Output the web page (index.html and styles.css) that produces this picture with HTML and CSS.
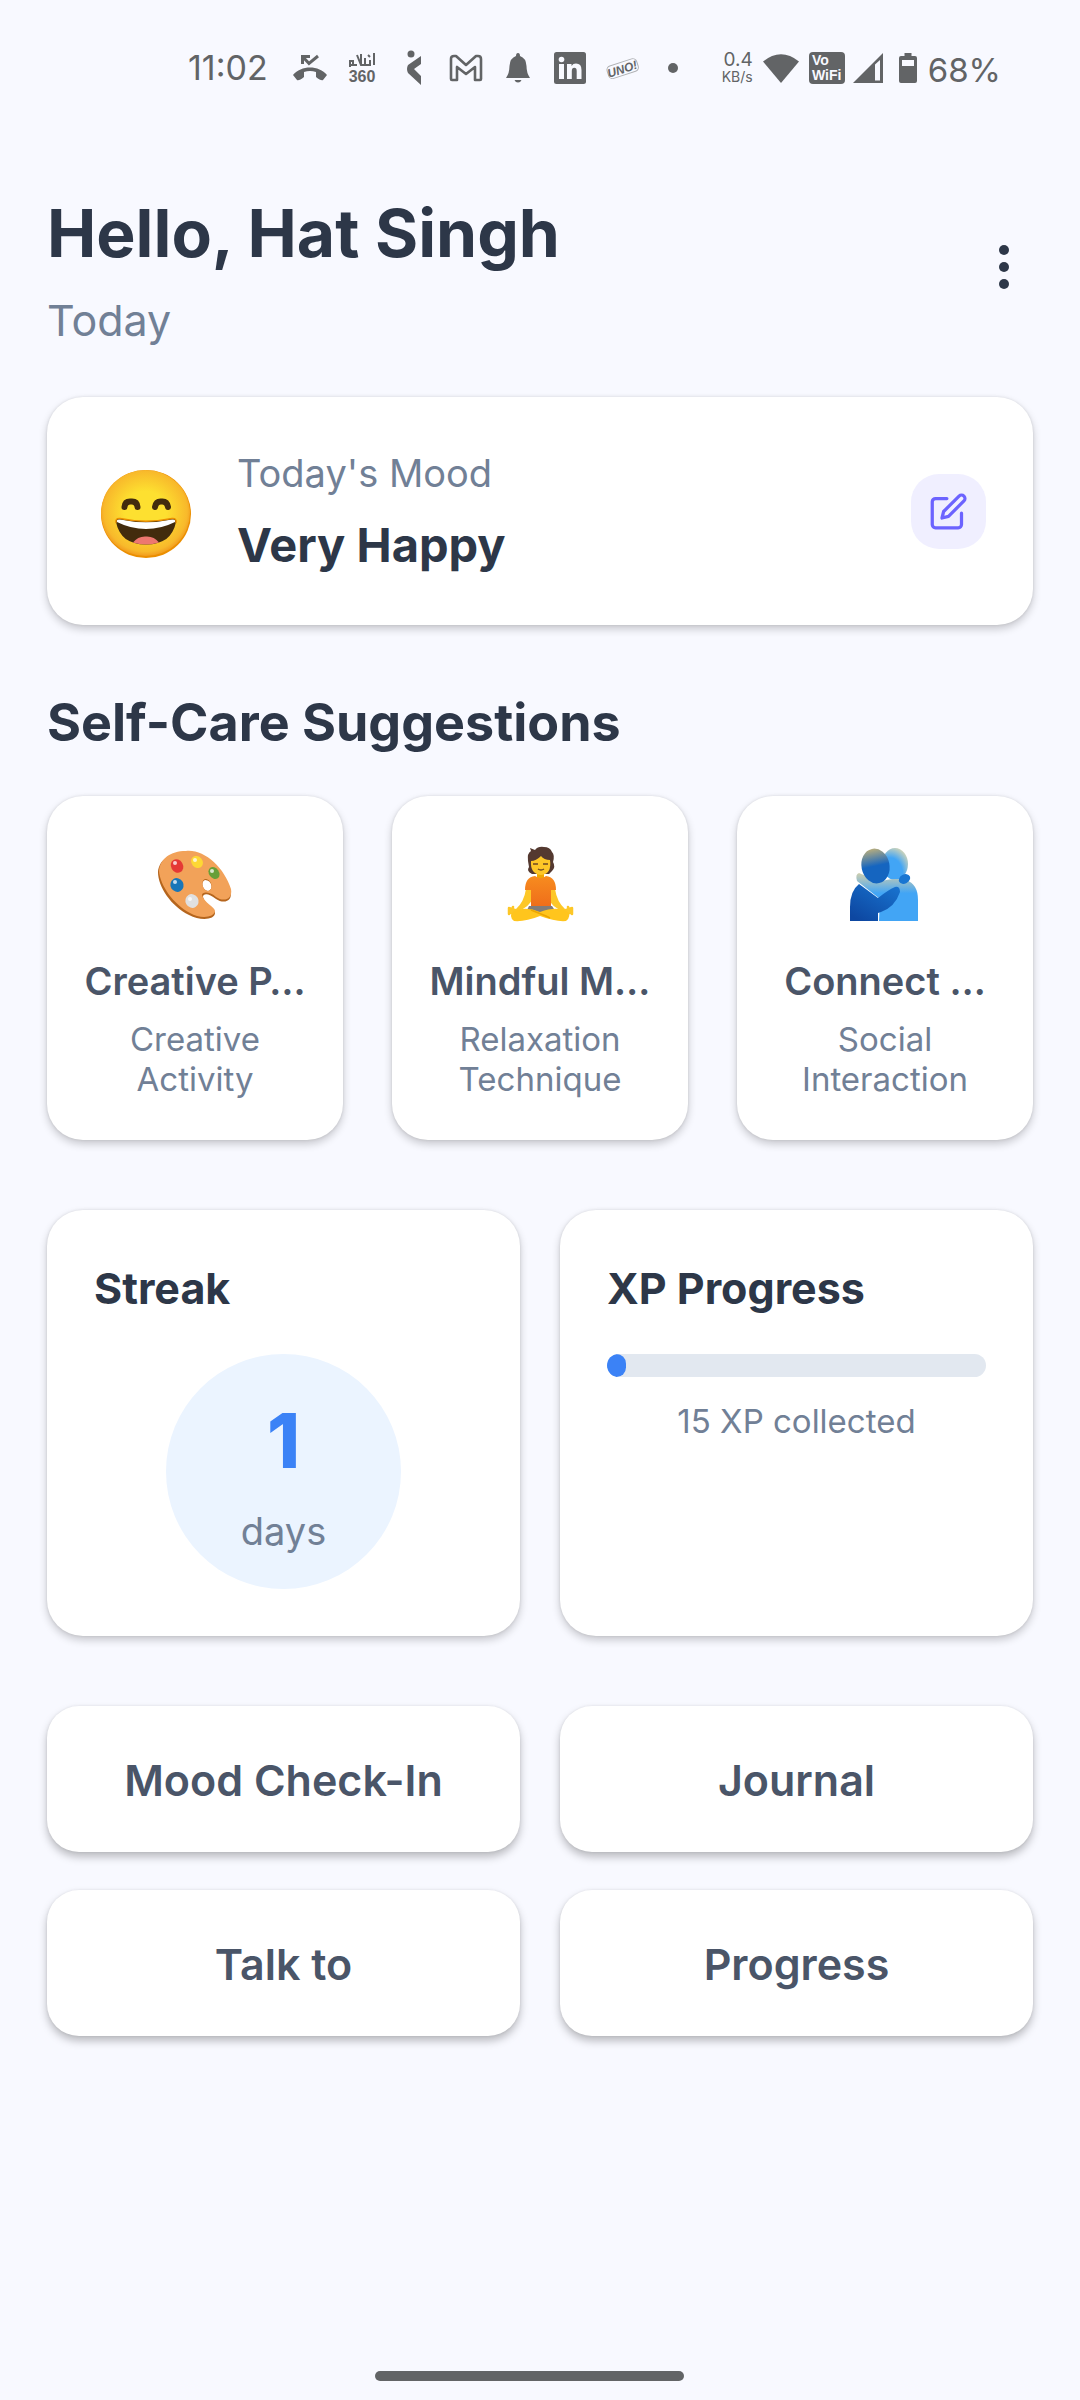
FILE: index.html
```html
<!DOCTYPE html>
<html lang="en">
<head>
<meta charset="utf-8">
<meta name="viewport" content="width=device-width, initial-scale=1">
<title>Mood Dashboard</title>
<link rel="stylesheet" href="styles.css">
</head>
<body>
<div class="screen">
  <div class="status">
    <span class="status-time">11:02</span>
    <div class="status-apps">
      <svg class="ic-call" viewBox="0 0 36 28" aria-hidden="true"><path d="M1 21C9 11 27 11 35 21L31 26Q29 27 24 23V18Q18 16 12 18V23Q7 27 5 26Z" fill="#626466"/><path d="M10.500 10V2.500H18M11 3L17 9.500L26 2" fill="none" stroke="#626466" stroke-width="3"/></svg>
      <svg class="ic-islam" viewBox="0 0 28 32" aria-hidden="true"><g fill="none" stroke="#626466" stroke-width="2"><path d="M26 1V13M22 8V13H17V6M17 13H13L9 3M13 2V13M9 13H5M2 15V9H5V13H1M20 3L22 5"/></g><text x="14" y="30" text-anchor="middle" class="ic-360">360</text></svg>
      <svg class="ic-k" viewBox="0 0 16 36" aria-hidden="true"><circle cx="5" cy="4" r="3.500" fill="#626466"/><path d="M15 6V14L8 19L15 26V35L2 23Q0 19 2 15Z" fill="#626466"/></svg>
      <svg class="ic-gmail" viewBox="0 0 34 28" aria-hidden="true"><path d="M2 5Q2 2 5 2H7L17 11L27 2H29Q32 2 32 5V25Q32 26 31 26H26V13L17 20L8 13V26H3Q2 26 2 25Z" fill="none" stroke="#626466" stroke-width="2.600" stroke-linejoin="round"/></svg>
      <svg class="ic-bell" viewBox="0 0 24 30" aria-hidden="true"><path d="M12 0Q14 0 14 3Q20 5 20.500 13Q20.500 20 24 25H0Q3.500 20 3.500 13Q4 5 10 3Q10 0 12 0ZM8.500 27H15.500Q14.500 29.500 12 29.500Q9.500 29.500 8.500 27Z" fill="#626466"/></svg>
      <svg class="ic-in" viewBox="0 0 32 32" aria-hidden="true"><rect width="32" height="32" rx="2.500" fill="#626466"/><circle cx="7.500" cy="7.500" r="2.800" fill="#f8f9ff"/><path d="M5 12H10V27H5ZM13 12H17.500V14Q19 11.600 22 11.600Q27.500 11.600 27.500 18V27H22.700V19Q22.700 15.700 20.300 15.700Q17.800 15.700 17.800 19V27H13Z" fill="#f8f9ff"/></svg>
      <svg class="ic-uno" viewBox="0 0 34 28" aria-hidden="true"><g transform="rotate(-18 17 14)"><rect x="1" y="8" width="31" height="13" rx="4" fill="none" stroke="#b0b2b5" stroke-width="1"/><text x="16" y="19" text-anchor="middle" class="ic-uno-text">UNO!</text></g></svg>
      <svg class="ic-more" viewBox="0 0 10 10" aria-hidden="true"><circle cx="5" cy="5" r="5" fill="#626466"/></svg>
    </div>
    <div class="status-system">
      <div class="net"><span class="net-rate">0.4</span><span class="net-unit">KB/s</span></div>
      <svg class="ic-wifi" viewBox="0 0 36 29" aria-hidden="true"><path d="M0 7.500Q18 -7 36 7.500L18 29Z" fill="#626466"/></svg>
      <svg class="ic-vo" viewBox="0 0 36 32" aria-hidden="true"><rect width="36" height="32" rx="4" fill="#626466"/><text x="3" y="13" class="ic-vo-text">Vo</text><text x="3" y="28" class="ic-vo-text">WiFi</text></svg>
      <svg class="ic-signal" viewBox="0 0 30 30" aria-hidden="true"><path fill-rule="evenodd" d="M0 30L30 0V30ZM22 11.500V27.500H27V7Z" fill="#626466"/></svg>
      <svg class="ic-battery" viewBox="0 0 18 30" aria-hidden="true"><path fill-rule="evenodd" d="M5.500 0H12.500V3H16Q18 3 18 5V28Q18 30 16 30H2Q0 30 0 28V5Q0 3 2 3H5.500ZM3 7V13H15V7Z" fill="#626466"/></svg>
      <span class="status-charge">68%</span>
    </div>
  </div>

  <main class="content">
    <header class="header">
      <div class="greeting">
        <h1 class="title">Hello, Hat Singh</h1>
        <p class="date">Today</p>
      </div>
      <button class="menu" type="button" aria-label="Menu">
        <svg class="menu-dots" viewBox="0 0 10 44"><g fill="#2d3748"><circle cx="5" cy="5" r="5"/><circle cx="5" cy="22" r="5"/><circle cx="5" cy="39" r="5"/></g></svg>
      </button>
    </header>

    <section class="card mood">
      <svg class="mood-face" viewBox="0 0 90 88" role="img" aria-label="Very happy face">
        <defs><radialGradient id="face" cx=".5" cy=".48" r=".52"><stop offset=".45" stop-color="#fde030"/><stop offset=".9" stop-color="#f8b92b"/><stop offset="1" stop-color="#f29c1f"/></radialGradient></defs>
        <ellipse cx="45" cy="44" rx="45" ry="44" fill="#eb8f00"/>
        <ellipse cx="44.500" cy="43" rx="44.500" ry="43" fill="url(#face)"/>
        <path d="M23.500 37Q24 31 30 31.500Q36 31 36.500 37M54 37Q55 31 60.500 31.500Q66 31 67 37" fill="none" stroke="#422b0d" stroke-width="6" stroke-linecap="round"/>
        <path d="M15 52Q14 48 19 48.500Q45 54 71 48.500Q76 48 75 52C72 67 62 74.500 45 74.500S18 67 15 52Z" fill="#422b0d"/>
        <path d="M32 72.500Q37 66 45 66.500Q53 66 58 72.500Q52 74.500 45 74.500T32 72.500Z" fill="#ed7770"/>
        <path d="M16 52Q15 49 19 49.500Q45 55 71 49.500Q75 49 74 52Q60 59 45 59T16 52Z" fill="#fff"/>
        <path d="M15 53Q14 48 19 48.500Q45 54 71 48.500Q76 48 75 53" fill="none" stroke="#eb8f00" stroke-width="1.500"/>
      </svg>
      <div class="mood-text">
        <p class="mood-label">Today's Mood</p>
        <p class="mood-value">Very Happy</p>
      </div>
      <button class="edit" type="button" aria-label="Edit mood">
        <svg class="edit-icon" viewBox="0 0 24 24" fill="none" stroke="#6c63ff" stroke-width="2" stroke-linecap="round" stroke-linejoin="round"><path d="M11 4H4a2 2 0 0 0-2 2v14a2 2 0 0 0 2 2h14a2 2 0 0 0 2-2v-7"/><path d="M18.500 2.500a2.121 2.121 0 0 1 3 3L12 15l-4 1 1-4 9.500-9.500z"/></svg>
      </button>
    </section>

    <h2 class="section-title">Self-Care Suggestions</h2>
    <section class="suggestions">
      <article class="card suggestion">
        <svg class="suggestion-art" viewBox="0 0 76 76" aria-hidden="true">
          <path d="M29 5C47 3 66 21 73 43C77 55 66 57 59 52C52 46 46 46 46 50C48 58 58 61 58 66C58 73 43 74 32 68C14 59 1 40 1 25C2 13 13 5 29 5ZM48 33C43 35 46 44 51 44C57 43 55 33 48 33Z" fill="#b5651d" fill-rule="evenodd"/>
          <path d="M29 4C47 2 67 20 74 42C76 53 66 55 59 50C52 44 45 45 45 48C47 56 58 60 58 64C57 71 43 72 33 66C16 57 3 38 2 24C3 12 13 4 29 4ZM48 32C43 34 46 44 51 44C57 43 55 32 48 32Z" fill="#f2a259" fill-rule="evenodd"/>
          <ellipse cx="20" cy="19" rx="6" ry="7" transform="rotate(-30 20 19)" fill="#e53935"/>
          <ellipse cx="40" cy="15" rx="5.500" ry="6.500" transform="rotate(-40 40 15)" fill="#fdd835"/>
          <ellipse cx="57" cy="26" rx="5" ry="6.500" transform="rotate(-35 57 26)" fill="#689f38"/>
          <ellipse cx="20" cy="38" rx="6.500" ry="7" transform="rotate(-30 20 38)" fill="#1976b8"/>
          <ellipse cx="35" cy="54" rx="6.500" ry="7" transform="rotate(-30 35 54)" fill="#e0e0e0"/>
          <g fill="#fff" opacity=".75"><circle cx="18" cy="16" r="2"/><circle cx="38" cy="13" r="2"/><circle cx="55" cy="24" r="2"/><circle cx="18" cy="35" r="2"/><circle cx="33" cy="52" r="2"/></g>
        </svg>
        <h3 class="suggestion-title">Creative P…</h3>
        <p class="suggestion-kind">Creative Activity</p>
      </article>
      <article class="card suggestion">
        <svg class="suggestion-art" viewBox="0 0 76 76" aria-hidden="true">
          <defs><linearGradient id="shirt" x2="0" y2="1"><stop stop-color="#f78c1f"/><stop offset="1" stop-color="#ef6c1a"/></linearGradient></defs>
          <path d="M26 14Q25 6 29 4L28 1L33 3Q36 -1 42 0Q48 0 50 5Q53 8 51 15Q54 20 50 24L47 27H30Q24 24 27 20Z" fill="#543930"/>
          <path d="M35 25H42V34H35Z" fill="#f0a800"/>
          <path d="M29 14Q34 14 39 9Q42 13 48 13Q50 27 39 28Q28 27 29 14Z" fill="#fdc727"/>
          <path d="M31 17H36M41 17H46M36 22Q39 24 42 22" fill="none" stroke="#6d4a24" stroke-width="1.500"/>
          <path d="M24 42H31V50Q28 60 16 64L11 69L6 62L8 60L14 62Q22 55 24 42ZM46 42H53Q55 55 63 62L69 60L71 62L66 69L61 64Q49 60 46 50Z" fill="#fdc727"/>
          <path d="M7 61V67M11 60L9 66M70 61V67M66 60L68 66" stroke="#fdc727" stroke-width="2.500" stroke-linecap="round"/>
          <path d="M23 43Q23 30 33 29Q39 33 44 29Q54 30 54 43H49V61H29V43Z" fill="url(#shirt)"/>
          <path d="M27 59H50L54 65H24Z" fill="#827c78"/>
          <path d="M12 64Q24 59 38 65Q54 59 65 64Q70 69 64 74Q54 75 38 69Q23 75 12 74Q6 69 12 64Z" fill="#ffc51d"/><path d="M29 63L44 69L48 71" fill="none" stroke="#eda600" stroke-width="1.500"/>
        </svg>
        <h3 class="suggestion-title">Mindful M…</h3>
        <p class="suggestion-kind">Relaxation Technique</p>
      </article>
      <article class="card suggestion">
        <svg class="suggestion-art" viewBox="0 0 76 76" aria-hidden="true">
          <defs>
            <linearGradient id="hug-a" x2="0" y2="1"><stop stop-color="#b7ad7e"/><stop offset=".5" stop-color="#1565c0"/></linearGradient>
            <radialGradient id="hug-b" cx=".3" cy=".8" r=".9"><stop offset=".55" stop-color="#42a5f5"/><stop offset="1" stop-color="#dcd9b4"/></radialGradient>
            <linearGradient id="hug-c" x2="0" y2="1"><stop stop-color="#d0cfae"/><stop offset=".42" stop-color="#42a5f5"/></linearGradient>
            <linearGradient id="hug-d" x1="1" y1="0" x2=".2" y2="1"><stop stop-color="#1976d2"/><stop offset="1" stop-color="#0d47a1"/></linearGradient>
          </defs>
          <ellipse cx="48" cy="17" rx="13" ry="16" fill="url(#hug-b)"/>
          <path d="M12 26Q8 27 10 34L33 52L32 74H71V53Q71 37 59 33Q44 30 33 35Z" fill="url(#hug-c)"/>
          <path d="M12 37L31 51Q41 43 48 40Q53 39 53 45Q48 60 34 65L31 66V74H3V60Q3 44 12 37Z" fill="url(#hug-d)"/>
          <ellipse cx="28.500" cy="19" rx="14" ry="17.500" transform="rotate(-12 28.500 19)" fill="url(#hug-a)"/>
          <ellipse cx="57.500" cy="32" rx="6" ry="4.500" transform="rotate(-28 57.500 32)" fill="#1976d2"/>
        </svg>
        <h3 class="suggestion-title">Connect …</h3>
        <p class="suggestion-kind">Social Interaction</p>
      </article>
    </section>

    <section class="stats">
      <article class="card stat">
        <h2 class="stat-title">Streak</h2>
        <div class="streak"><span class="streak-count">1</span><span class="streak-unit">days</span></div>
      </article>
      <article class="card stat">
        <h2 class="stat-title">XP Progress</h2>
        <div class="bar" role="progressbar" aria-label="XP" aria-valuenow="5" aria-valuemin="0" aria-valuemax="100"><div class="bar-fill" style="width: 5%"></div></div>
        <p class="xp">15 XP collected</p>
      </article>
    </section>

    <nav class="actions">
      <button class="action" type="button">Mood Check-In</button>
      <button class="action" type="button">Journal</button>
      <button class="action" type="button">Talk to</button>
      <button class="action" type="button">Progress</button>
    </nav>
  </main>
  <div class="home"><div class="home-bar"></div></div>
</div>
</body>
</html>
```
FILE: styles.css
```css
* { box-sizing: border-box; margin: 0; padding: 0; }

body {
  background: #f8f9ff;
  color: #2d3748;
  font-family: Inter, "Noto Sans", sans-serif;
}

button { border: 0; font: inherit; cursor: pointer; }
svg { display: block; flex: none; overflow: visible; }

.screen {
  min-height: 100vh;
  display: flex;
  flex-direction: column;
}

/* Status bar */
.status {
  display: flex;
  align-items: center;
  height: 136px;
  padding: 0 79px 0 188px;
  color: #626466;
}
.status-time { font-size: 34px; line-height: 40px; }
.status-apps { display: flex; align-items: center; margin-left: 24px; }
.status-system { display: flex; align-items: center; margin-left: auto; }
.ic-call { width: 36px; height: 28px; }
.ic-islam { width: 28px; height: 32px; margin-left: 20px; }
.ic-k { width: 16px; height: 36px; margin-left: 30px; }
.ic-gmail { width: 34px; height: 28px; margin-left: 27px; }
.ic-bell { width: 24px; height: 30px; margin-left: 23px; }
.ic-in { width: 32px; height: 32px; margin-left: 24px; }
.ic-uno { width: 34px; height: 28px; margin-left: 20px; }
.ic-more { width: 10px; height: 10px; margin-left: 28px; }
.ic-360 { font: bold 16px "Liberation Sans Narrow", "Liberation Sans", sans-serif; fill: #626466; }
.ic-uno-text { font: italic bold 12px "Liberation Sans", sans-serif; fill: #626466; }
.ic-vo-text { font: bold 14px "Liberation Sans", sans-serif; fill: #f8f9ff; }
.net { display: flex; flex-direction: column; align-items: flex-end; }
.net-rate { font-size: 19px; line-height: 18px; }
.net-unit { font-size: 14px; line-height: 16px; }
.ic-wifi { width: 36px; height: 29px; margin-left: 10px; }
.ic-vo { width: 36px; height: 32px; margin-left: 10px; }
.ic-signal { width: 30px; height: 30px; margin-left: 8px; }
.ic-battery { width: 18px; height: 30px; margin-left: 16px; }
.status-charge { margin-left: 11px; padding-top: 4px; font-size: 33px; line-height: 40px; }

/* Content */
.content { flex: 1; padding: 57px 47px 0; }

.header { display: flex; align-items: flex-start; justify-content: space-between; }
.title { font-size: 66px; line-height: 80px; font-weight: 700; }
.date { margin-top: 21px; font-size: 43px; line-height: 52px; color: #718096; }
.menu {
  display: flex;
  align-items: center;
  justify-content: center;
  width: 58px;
  height: 80px;
  margin-top: 34px;
  background: none;
}
.menu-dots { width: 10px; height: 44px; }

.card {
  background: #fff;
  border-radius: 36px;
  box-shadow: 0 0 3px rgba(0, 0, 0, .1), 0 4px 8px rgba(0, 0, 0, .2);
}

.mood {
  display: flex;
  align-items: center;
  margin-top: 51px;
  padding: 47px 47px 47px 54px;
  min-height: 228px;
}
.mood-face { width: 90px; height: 88px; margin-top: 6px; }
.mood-text { flex: 1; margin-left: 46px; }
.mood-label { font-size: 38px; line-height: 48px; color: #718096; }
.mood-value { margin-top: 20px; font-size: 47px; line-height: 56px; font-weight: 700; }
.edit {
  display: flex;
  align-items: center;
  justify-content: center;
  width: 75px;
  height: 75px;
  border-radius: 28px;
  background: #f0efff;
}
.edit-icon { width: 39px; height: 39px; }

.section-title { margin-top: 66px; font-size: 52px; line-height: 64px; font-weight: 700; }

.suggestions { display: grid; grid-template-columns: repeat(3, 1fr); gap: 49px; margin-top: 41px; }
.suggestion {
  display: flex;
  flex-direction: column;
  align-items: center;
  min-width: 0;
  padding: 51px 35px 41px;
  text-align: center;
}
.suggestion-art { width: 76px; height: 76px; }
.suggestion-title {
  margin-top: 34px;
  white-space: nowrap;
  color: #4a5568;
  font-size: 38px;
  line-height: 48px;
  font-weight: 600;
}
.suggestion-kind { margin-top: 14px; font-size: 33px; line-height: 40px; color: #718096; }

.stats { display: grid; grid-template-columns: 1fr 1fr; gap: 40px; margin-top: 70px; }
.stat { padding: 48px 47px 47px; }
.stat-title { font-size: 43px; line-height: 60px; font-weight: 700; }
.streak {
  display: flex;
  flex-direction: column;
  align-items: center;
  width: 235px;
  height: 235px;
  margin: 36px auto 0;
  padding-top: 42px;
  border-radius: 50%;
  background: #ebf4ff;
}
.streak-count { font-size: 75px; line-height: 90px; font-weight: 800; color: #3b82f6; }
.streak-unit { margin-top: 21px; font-size: 38px; line-height: 48px; color: #718096; }
.bar { height: 23px; margin-top: 36px; border-radius: 12px; background: #e2e8f0; overflow: hidden; }
.bar-fill { height: 100%; border-radius: 12px; background: #3b82f6; }
.xp { margin-top: 24px; font-size: 33px; line-height: 40px; text-align: center; color: #718096; }

.actions { display: grid; grid-template-columns: 1fr 1fr; gap: 38px 40px; margin-top: 70px; }
.action {
  padding: 46px 20px 44px;
  border-radius: 32px;
  background: #fff;
  box-shadow: 0 0 3px rgba(0, 0, 0, .08), 0 5px 8px rgba(0, 0, 0, .25);
  color: #4a5568;
  font-size: 43px;
  line-height: 56px;
  font-weight: 600;
}

/* Gesture bar */
.home { display: flex; justify-content: center; padding: 40px 22px 19px 0; }
.home-bar { width: 309px; height: 10px; border-radius: 5px; background: #626466; }
```
